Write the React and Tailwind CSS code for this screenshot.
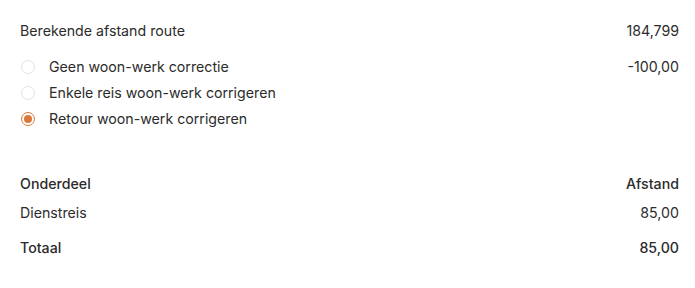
import React, { useState } from "react";

const options = [
  { id: "geen", label: "Geen woon-werk correctie", value: "-100,00" },
  { id: "enkele", label: "Enkele reis woon-werk corrigeren" },
  { id: "retour", label: "Retour woon-werk corrigeren" },
];

export default function App() {
  const [selected, setSelected] = useState("retour");

  return (
    <div className="min-h-screen bg-white text-[14.2px] text-[#2b2b2b] font-['Inter','Noto_Sans',sans-serif]">
      <div className="pl-[20px] pr-[16px] pt-[21px]">
        {/* Route */}
        <div className="flex items-center justify-between h-[20px]">
          <span>Berekende afstand route</span>
          <span>184,799</span>
        </div>

        <div className="mt-[13px] flex flex-col">
          {options.map((opt) => (
            <label
              key={opt.id}
              onClick={() => setSelected(opt.id)}
              className="flex items-center justify-between h-[26px] cursor-pointer"
            >
              <div className="flex items-center gap-[14px] pl-[1px]">
                <span
                  className={`w-[14px] h-[14px] rounded-full border flex items-center justify-center ${
                    selected === opt.id ? "border-[#d9783a]" : "border-[#e3e3e3]"
                  }`}
                >
                  {selected === opt.id && <span className="w-[8px] h-[8px] rounded-full bg-[#d9783a]" />}
                </span>
                <span>{opt.label}</span>
              </div>
              {opt.value && <span>{opt.value}</span>}
            </label>
          ))}
        </div>

        {/* Table */}
        <div className="mt-[38px]">
          <div className="flex items-center justify-between h-[28px] font-medium">
            <span>Onderdeel</span>
            <span>Afstand</span>
          </div>
          <div className="flex items-center justify-between h-[30px]">
            <span>Dienstreis</span>
            <span>85,00</span>
          </div>
          <div className="flex items-center justify-between h-[40px] font-medium">
            <span>Totaal</span>
            <span>85,00</span>
          </div>
        </div>
      </div>
    </div>
  );
}
